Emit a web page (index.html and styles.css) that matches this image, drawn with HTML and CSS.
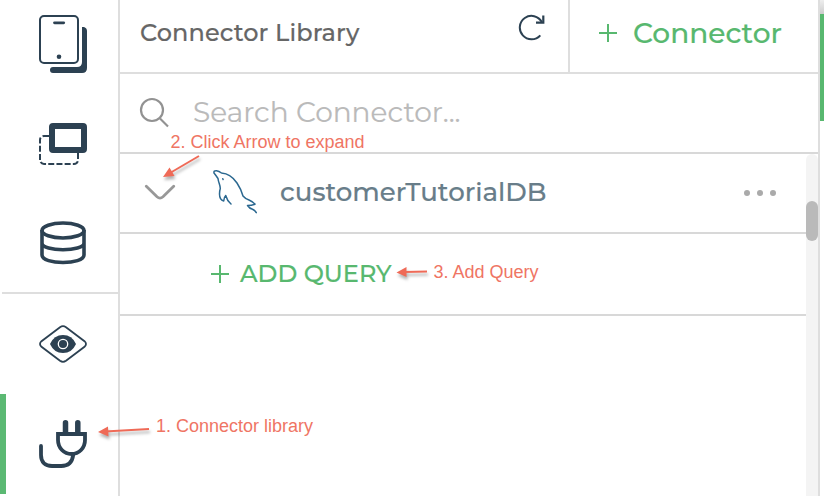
FILE: index.html
```html
<!DOCTYPE html>
<html lang="en">
<head>
<meta charset="utf-8">
<title>Connector Library</title>
<link rel="stylesheet" href="styles.css">
</head>
<body>
<div class="app">
  <nav class="rail">
    <div class="rail-group rail-top">
      <svg class="ico pages" width="50" height="60" viewBox="38 14 50 60"><path d="M82 27h2q3 1 3 4v37q0 5-5 5H53q-3 0-3-3 0-3 3-3h24q5 0 5-5z" fill="#2c4152"/><rect x="40" y="16" width="38" height="47" rx="4" fill="#fff" stroke="#2c4152" stroke-width="2"/><path d="M54.500 22.800h9.200" stroke="#2c4152" stroke-width="2.800" stroke-linecap="round"/><circle cx="59" cy="56.800" r="2.300" fill="#2c4152"/></svg>
      <svg class="ico layers" width="50" height="44" viewBox="38 122 50 44"><rect x="40" y="136" width="38" height="28" rx="4" fill="none" stroke="#2c4152" stroke-width="2" stroke-dasharray="6 2.2"/><rect x="52" y="126" width="32" height="24" rx="1" fill="#fff" stroke="#2c4152" stroke-width="6" stroke-linejoin="round"/></svg>
      <svg class="ico database" width="50" height="46" viewBox="38 220 50 46" fill="none" stroke="#2c4152" stroke-width="3.600"><ellipse cx="63" cy="230.500" rx="21" ry="7.500"/><path d="M42 230v25c0 10 42 10 42 0v-25M42 243c0 9 42 9 42 0"/></svg>
    </div>
    <div class="rail-group rail-bottom">
      <svg class="ico preview" width="50" height="40" viewBox="38 324 50 40"><path d="M60 327.200q3-2 6 0l18.500 14q3 2.800 0 5.600L66 360.800q-3 2-6 0l-18.500-14q-3-2.800 0-5.600z" fill="none" stroke="#2c4152" stroke-width="1.800"/><path d="M50 344q4-9 13-9t13 9q-4 9-13 9t-13-9z" fill="#2c4152"/><circle cx="63" cy="344" r="4.700" fill="#2c4152" stroke="#fff" stroke-width="1.300"/></svg>
      <div class="active-item">
        <svg class="ico plug" width="50" height="50" viewBox="38 419 50 50" fill="none" stroke="#2c4152" stroke-width="4"><path d="M65.500 422.700V434M77.800 422.700V434" stroke-width="5.500" stroke-linecap="round"/><path d="M58 434h27v6c0 8-6 14-13.500 14S58 448 58 440z" fill="#fff" stroke-width="3.800"/><path d="M73.200 455c-1 8-6 11-12 11H52c-7 0-11-4-11-11v-9" stroke-linecap="round" stroke-width="3.800"/></svg>
      </div>
    </div>
  </nav>
  <main class="panel">
    <header class="head">
      <h1 class="title"><span class="txt">Connector Library</span></h1>
      <svg class="refresh" width="28" height="28" viewBox="518 14 28 28" fill="none" stroke="#2c4152" stroke-width="2"><path d="M541.800 22A11.700 11.700 0 1 0 540.300 35.300"/><path d="M543.300 15.500v7.200H536" stroke-width="2.200"/></svg>
      <button class="new"><svg width="18" height="18" viewBox="0 0 18 18"><path d="M0 9h18M9 0v18" stroke="#58b86f" stroke-width="2"/></svg><span class="txt">Connector</span></button>
    </header>
    <div class="search">
      <svg width="30" height="31" viewBox="139 97 30 31" fill="none" stroke="#929292" stroke-width="2.200"><circle cx="152" cy="110" r="11"/><path d="M160 118.500l8 8"/></svg>
      <span class="placeholder txt">Search Connector...</span>
    </div>
    <div class="content">
      <div class="list">
        <div class="row connector">
          <svg class="chev" width="32" height="18" viewBox="144 183 32 18"><path d="M146.300 186.200L157 196.800q3 2.600 6 0l10.700-10.600" fill="none" stroke="#989898" stroke-width="2.800" stroke-linecap="round"/></svg>
          <svg class="dolphin" width="46" height="46" viewBox="212 168 46 46" fill="none" stroke="#2b6890" stroke-width="1.500" stroke-linecap="round" stroke-linejoin="round"><path d="M231 203Q227 199.500 225.700 194.500Q224 196 223.700 200Q219.500 199 219.500 193Q219.500 190 220.300 187.500C220 183 218.500 182 218 177.500Q216 174.500 214 172Q213.500 169.500 216.500 169.700Q219 170 221.500 172C228 172.500 233 176 237 182Q241 188 243 195Q245 197.500 249 199Q253.500 201 255 203.200Q251.500 204.500 247.500 204.500Q249.500 207.500 252.500 208.300Q255 209.500 256.300 211.700"/><path d="M222.800 177.700l.3.800"/></svg>
          <span class="name txt">customerTutorialDB</span>
          <span class="more"><i></i><i></i><i></i></span>
        </div>
        <div class="row query">
          <svg width="18" height="18" viewBox="0 0 18 18"><path d="M0 9h18M9 0v18" stroke="#58b86f" stroke-width="2"/></svg>
          <span class="add txt">ADD QUERY</span>
        </div>
      </div>
      <div class="track"><div class="thumb"></div></div>
    </div>
  </main>
  <aside class="edge"><div class="edge-shade"></div><div class="edge-green"></div></aside>
  <svg class="arrows" width="824" height="496" viewBox="0 0 824 496"><g fill="#ef6a57" stroke="#ef6a57" stroke-width="2"><path d="M199 156L170 173"/><path d="M427 271.500L404 272"/><path d="M149 429L105 431.500"/><g stroke="none"><path d="M163 177l6.500-9.500 5 8.500z"/><path d="M396.500 272.400l10-5.500v10z"/><path d="M98 432l10-5.500.5 10z"/></g></g></svg>
  <span class="note note-1">1. Connector library</span>
  <span class="note note-2">2. Click Arrow to expand</span>
  <span class="note note-3">3. Add Query</span>
</div>
</body>
</html>
```
FILE: styles.css
```css
* { box-sizing: border-box; }
body { margin: 0; background: #fff; font-family: Montserrat, Inter, "Open Sans", sans-serif; font-weight: 500; }
svg { display: block; flex: none; }
.txt { white-space: nowrap; line-height: 1; -webkit-text-stroke: .15px currentColor; }
.app { position: relative; display: flex; width: 824px; height: 496px; overflow: hidden; }
.rail { width: 120px; flex: none; border-right: 2px solid #dedede; }
.rail-group { display: flex; flex-direction: column; }
.ico { margin-left: 38px; }
.rail-top { height: 294px; padding-top: 14px; border-bottom: 2px solid #dedede; margin-left: 2px; }
.rail-top .ico { margin-left: 36px; }
.layers { margin-top: 48px; }
.database { margin-top: 54px; }
.rail-bottom { padding-top: 30px; }
.active-item { height: 100px; margin-top: 30px; padding-top: 25px; border-left: 6px solid #5bb973; }
.active-item .ico { margin-left: 32px; }
.panel { width: 700px; flex: none; display: flex; flex-direction: column; border-right: 2px solid #dedede; }
.head { display: flex; align-items: center; height: 74px; flex: none; border-bottom: 2px solid #dedede; }
.title { margin: 0 0 8px 20px; width: 378px; font-size: 24px; font-weight: 500; color: #666; }
.title .txt { letter-spacing: .1px; }
.refresh { margin-bottom: 16px; }
.new { display: flex; align-items: center; height: 72px; width: 250px; margin-left: auto; border: 0; border-left: 2px solid #dedede; background: none; padding: 0 0 6px 29px; gap: 16px; font: 500 28px Montserrat, Inter, sans-serif; color: #58b86f; }
.search { display: flex; align-items: center; height: 80px; flex: none; border-bottom: 2px solid #d8d8d8; padding: 0 0 2px 19px; gap: 24px; }
.placeholder { font-size: 28px; font-weight: 400; color: #bababa; padding-bottom: 1px; }
.content { display: flex; flex: 1; }
.list { flex: 1; }
.row { display: flex; align-items: center; border-bottom: 2px solid #d8d8d8; }
.connector { height: 80px; padding: 0 30px 2px 24px; }
.dolphin { margin-left: 36px; }
.name { margin-left: 22px; font-size: 26px; color: #687d89; }
.more { display: flex; gap: 7px; margin: 1px 0 0 auto; }
.more i { width: 6px; height: 6px; border-radius: 50%; background: #aaa; }
.query { height: 82px; padding-left: 91px; gap: 11px; }
.add { font-size: 24px; color: #58b86f; }
.track { width: 12px; background: #f4f4f4; border-radius: 6px 6px 0 0; padding-top: 47px; }
.thumb { height: 40px; border-radius: 6px; background: #bababa; }
.edge { width: 4px; }
.edge-shade { height: 14px; background: linear-gradient(#eee, #ccc); }
.edge-green { height: 107px; background: #58b86f; }
.arrows { position: absolute; left: 0; top: 0; filter: drop-shadow(1px 3px 1.5px rgba(0,0,0,.3)); }
.note { position: absolute; font: 400 18px/20px "Liberation Sans", Arial, sans-serif; color: #ef7564; white-space: nowrap; }
.note-1 { left: 156px; top: 416px; }
.note-2 { left: 170.500px; top: 132px; }
.note-3 { left: 433.500px; top: 262px; }
```
